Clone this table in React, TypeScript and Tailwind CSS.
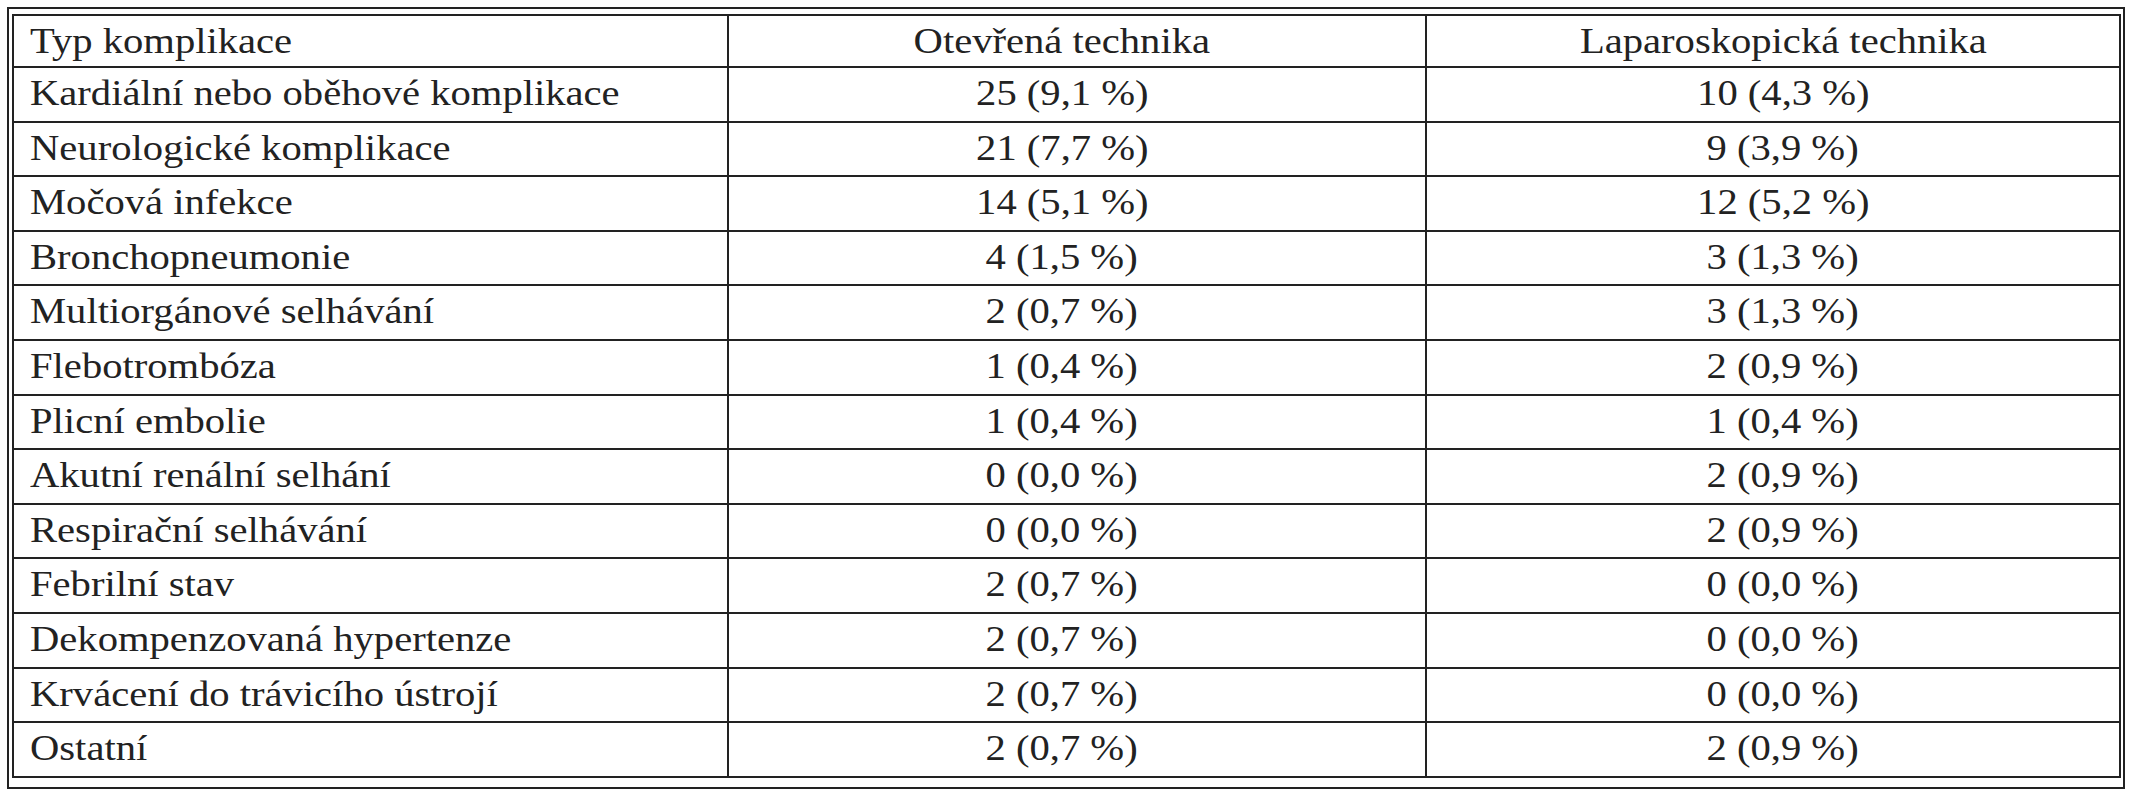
const rows: [string, string, string][] = [
  ['Kardiální nebo oběhové komplikace', '25 (9,1 %)', '10 (4,3 %)'],
  ['Neurologické komplikace', '21 (7,7 %)', '9 (3,9 %)'],
  ['Močová infekce', '14 (5,1 %)', '12 (5,2 %)'],
  ['Bronchopneumonie', '4 (1,5 %)', '3 (1,3 %)'],
  ['Multiorgánové selhávání', '2 (0,7 %)', '3 (1,3 %)'],
  ['Flebotrombóza', '1 (0,4 %)', '2 (0,9 %)'],
  ['Plicní embolie', '1 (0,4 %)', '1 (0,4 %)'],
  ['Akutní renální selhání', '0 (0,0 %)', '2 (0,9 %)'],
  ['Respirační selhávání', '0 (0,0 %)', '2 (0,9 %)'],
  ['Febrilní stav', '2 (0,7 %)', '0 (0,0 %)'],
  ['Dekompenzovaná hypertenze', '2 (0,7 %)', '0 (0,0 %)'],
  ['Krvácení do trávicího ústrojí', '2 (0,7 %)', '0 (0,0 %)'],
  ['Ostatní', '2 (0,7 %)', '2 (0,9 %)'],
];

// the source table is stretched sideways, so the text is widened a bit
function Txt({ children, left }: { children: string; left?: boolean }) {
  return (
    <span className={left ? 'inline-block origin-left scale-x-[1.16]' : 'inline-block origin-center scale-x-[1.16]'}>
      {children}
    </span>
  );
}

export default function App() {
  return (
    <div className="min-h-screen bg-white pl-[7px] pt-[7px] font-['Liberation_Serif','Times_New_Roman',serif] text-[35px] text-[#222]">
      <div className="w-[2118px] border-2 border-[#222] pt-[5px] pl-[3px] pr-[2px] pb-[9px]">
        <div className="overflow-hidden border-2 border-[#222]">
          <div className="grid h-[50px] grid-cols-[713px_698px_1fr]">
            <div className="flex items-center pl-[16px] pb-[7px]">
              <Txt left>Typ komplikace</Txt>
            </div>
            <div className="flex items-center justify-center border-l-2 border-[#222] pr-[30px] pb-[7px]">
              <Txt>Otevřená technika</Txt>
            </div>
            <div className="flex items-center justify-center border-l-2 border-[#222] pl-[20px] pb-[7px]">
              <Txt>Laparoskopická technika</Txt>
            </div>
          </div>
          {rows.map(([name, open, lap]) => (
            <div key={name} className="grid h-[54.6px] grid-cols-[713px_698px_1fr] border-t-2 border-[#222]">
              <div className="flex items-center pl-[16px] pb-[13px]">
                <Txt left>{name}</Txt>
              </div>
              <div className="flex items-center justify-center border-l-2 border-[#222] pr-[30px] pb-[13px]">
                <Txt>{open}</Txt>
              </div>
              <div className="flex items-center justify-center border-l-2 border-[#222] pl-[20px] pb-[13px]">
                <Txt>{lap}</Txt>
              </div>
            </div>
          ))}
        </div>
      </div>
    </div>
  );
}
